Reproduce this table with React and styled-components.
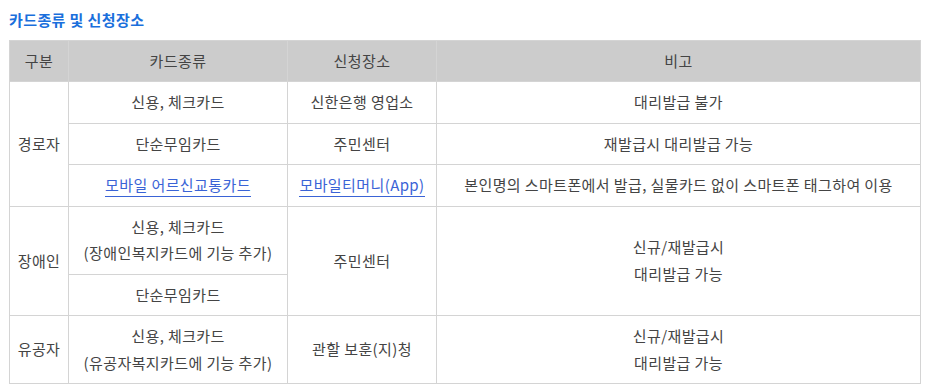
import React from 'react';
import styled, { createGlobalStyle } from 'styled-components';

/* -------------------------  STYLES ------------------------- */

const GlobalStyle = createGlobalStyle`
  body {
    margin: 0;
    background: #fff;
    font-family: "Noto Sans CJK KR", "Noto Sans", sans-serif;
  }
`;

const Wrapper = styled.div`
  padding: 9px 6px 0 9px;
  width: 912px;
`;

const Title = styled.h3`
  margin: 0 0 10px;
  font-size: 15px;
  font-weight: 700;
  letter-spacing: 0.4px;
  line-height: 21px;
  color: #1a6fdc;
`;

const Table = styled.table`
  width: 912px;
  border-collapse: collapse;
  table-layout: fixed;
  border: 1px solid #d4d4d4;
  font-size: 15px;
  letter-spacing: 0.4px;
  color: #444;
`;

const Th = styled.th`
  height: 40px;
  padding: 0;
  background: #cccccc;
  border: 1px solid #d4d4d4;
  font-weight: 400;
  line-height: 20px;
  color: #444;
  text-align: center;
  vertical-align: middle;
`;

const Td = styled.td`
  padding: 7px 4px;
  border: 1px solid #d4d4d4;
  line-height: 26.5px;
  text-align: center;
  vertical-align: middle;
`;

const Link = styled.a`
  color: #3a63d6;
  text-decoration: none;
  border-bottom: 1px solid #3a63d6;
  padding-bottom: 1px;
`;

/* -------------------------  RENDER ------------------------- */

const App = () => (
  <>
    <GlobalStyle />
    <Wrapper>
      <Title>카드종류 및 신청장소</Title>
      <Table>
        <colgroup>
          <col style={{ width: 59 }} />
          <col style={{ width: 219 }} />
          <col style={{ width: 149 }} />
          <col />
        </colgroup>
        <thead>
          <tr>
            <Th>구분</Th>
            <Th>카드종류</Th>
            <Th>신청장소</Th>
            <Th>비고</Th>
          </tr>
        </thead>
        <tbody>
          <tr>
            <Td rowSpan={3}>경로자</Td>
            <Td>신용, 체크카드</Td>
            <Td>신한은행 영업소</Td>
            <Td>대리발급 불가</Td>
          </tr>
          <tr>
            <Td>단순무임카드</Td>
            <Td>주민센터</Td>
            <Td>재발급시 대리발급 가능</Td>
          </tr>
          <tr>
            <Td><Link href="#">모바일 어르신교통카드</Link></Td>
            <Td><Link href="#">모바일티머니(App)</Link></Td>
            <Td>본인명의 스마트폰에서 발급, 실물카드 없이 스마트폰 태그하여 이용</Td>
          </tr>
          <tr>
            <Td rowSpan={2}>장애인</Td>
            <Td>신용, 체크카드<br />(장애인복지카드에 기능 추가)</Td>
            <Td rowSpan={2}>주민센터</Td>
            <Td rowSpan={2}>신규/재발급시<br />대리발급 가능</Td>
          </tr>
          <tr>
            <Td>단순무임카드</Td>
          </tr>
          <tr>
            <Td>유공자</Td>
            <Td>신용, 체크카드<br />(유공자복지카드에 기능 추가)</Td>
            <Td>관할 보훈(지)청</Td>
            <Td>신규/재발급시<br />대리발급 가능</Td>
          </tr>
        </tbody>
      </Table>
    </Wrapper>
  </>
);

export default App;
